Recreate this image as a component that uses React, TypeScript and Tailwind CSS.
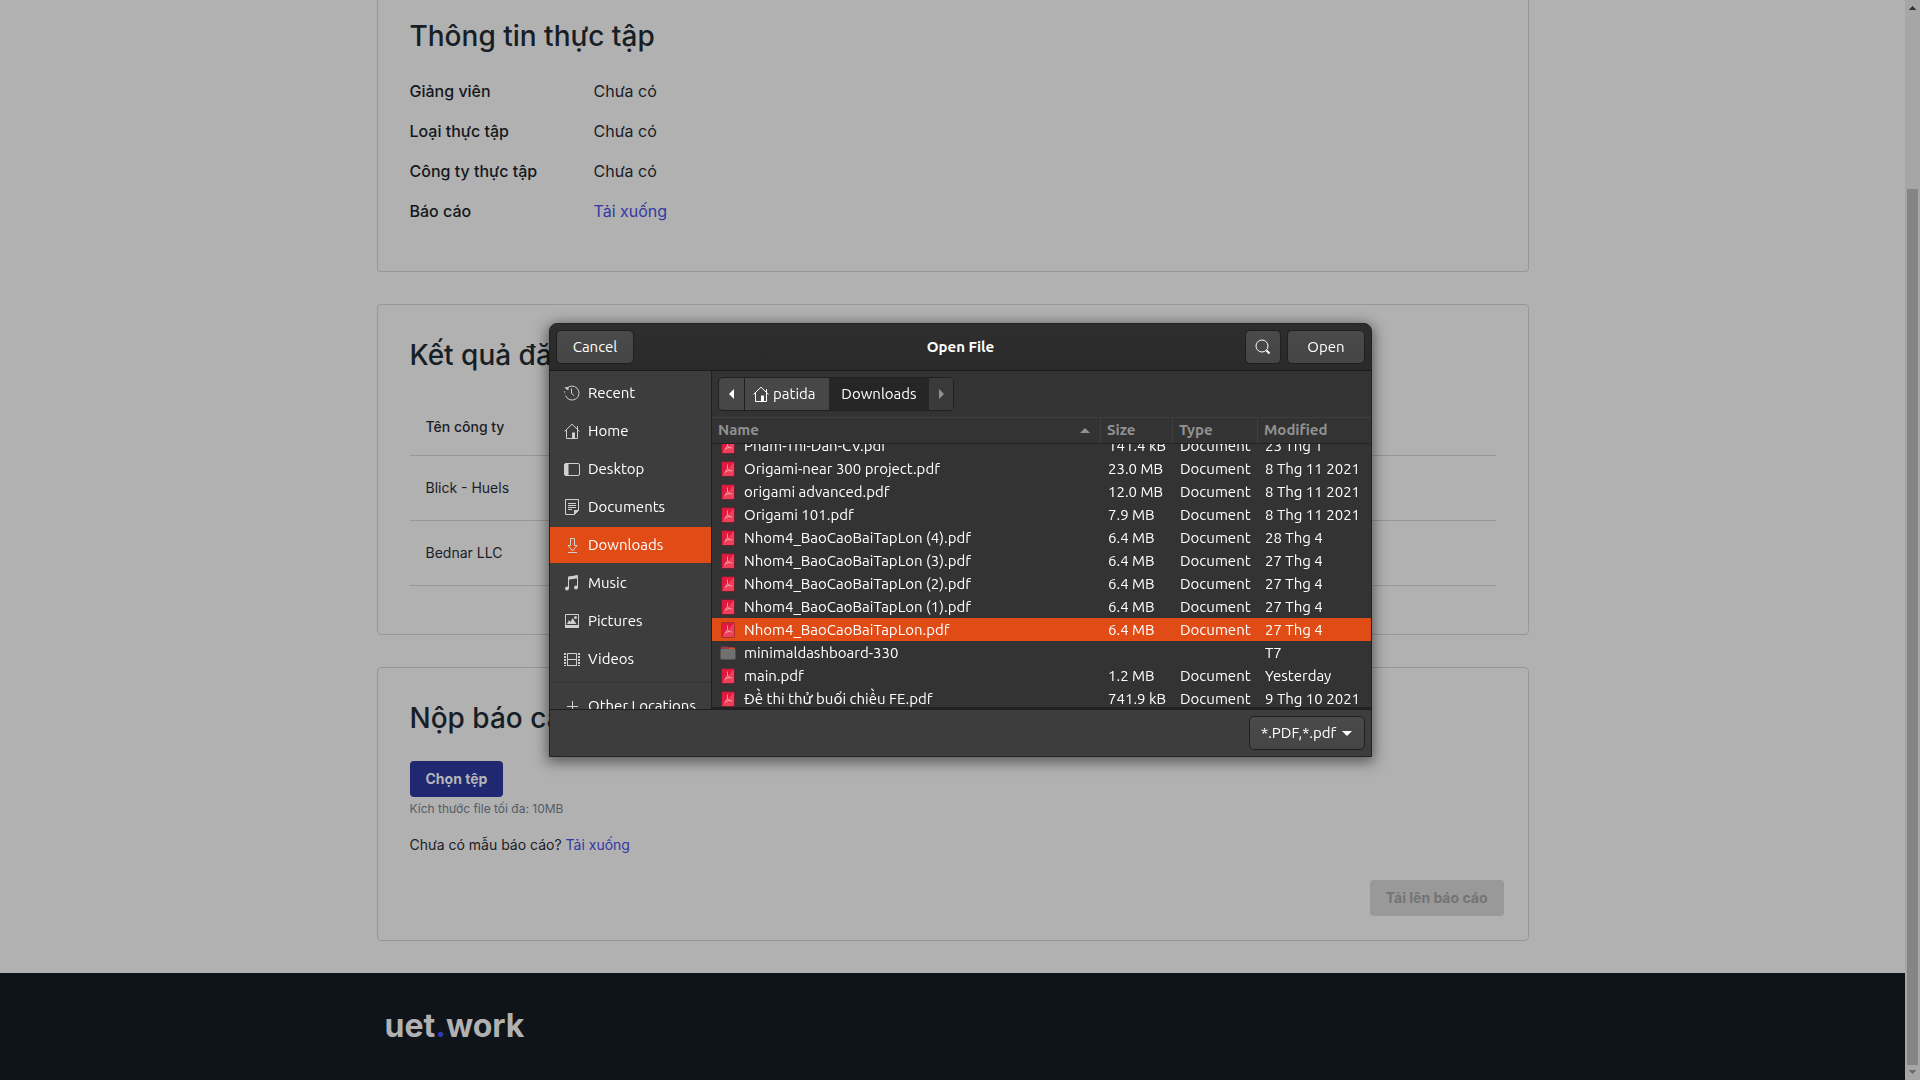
import { useId, useLayoutEffect, useRef } from "react";
import type { ReactNode } from "react";

const uiFont = "font-['Ubuntu','Noto_Sans',sans-serif]";

function Svg({ children, className = "" }: { children: ReactNode; className?: string }) {
  return (
    <svg viewBox="0 0 16 16" width="16" height="16" fill="none" stroke="currentColor" aria-hidden="true" className={"shrink-0 " + className}>
      {children}
    </svg>
  );
}

const RecentIcon = () => (
  <Svg>
    <path d="M2.2 4.2A7 7 0 1 1 1.5 10.6M7.5 3.5v4.7l2.5 2.6" />
    <path d="M.7 8.3h1.4M.2 2.5 4.6 2 4.4 5.5Z" fill="currentColor" stroke="none" />
    <path d="M.6 6.3v2.5" strokeDasharray="1.2 1" />
  </Svg>
);
const HomeIcon = () => (
  <Svg>
    <path d="M.5 8.4 8 1.2l7.5 7.2M2.5 7v8.5h3M13.5 3v12.5h-3" />
    <path d="M8 9.5h3V16H8z" fill="currentColor" stroke="none" />
    <path d="M3 15.5h5" />
  </Svg>
);
const DesktopIcon = () => (
  <Svg>
    <rect x=".5" y="2.5" width="15" height="12" rx="1.5" />
    <path d="M1 3h3v11H1z" fill="currentColor" />
  </Svg>
);
const DocumentsIcon = () => (
  <Svg>
    <path d="M1.5.5h13v11l-4 4h-9zM4 4.5h8M4 6.5h8M4 8.5h8M4 10.5h4" />
    <path d="M10 11h5l-5 5z" fill="currentColor" stroke="none" />
  </Svg>
);
const DownloadsIcon = () => (
  <Svg>
    <path d="M6.5 1.500h4v7H13L8.500 14 4 8.500h2.500zM4 15.500h9" />
  </Svg>
);
const MusicIcon = () => (
  <Svg>
    <path d="M4.500 13V2.200l9-1.500V12" />
    <path d="M4 1.800 14 .2v3L4 4.700z" fill="currentColor" stroke="none" />
    <circle cx="3" cy="13.500" r="2" fill="currentColor" stroke="none" />
    <circle cx="12" cy="12.500" r="2" fill="currentColor" stroke="none" />
  </Svg>
);
const PicturesIcon = () => (
  <Svg>
    <path d="M1.500 1.500h13v12h-13z" />
    <path d="M1 12h14v3H1zM3 11l2-4 1.500 2L8.500 5l4 6z" fill="currentColor" stroke="none" />
    <circle cx="11.500" cy="4.500" r="1.500" fill="currentColor" stroke="none" />
  </Svg>
);
const VideosIcon = () => (
  <Svg>
    <path d="M3.500 2v13M12.500 2v13M3 2.500h10M3 8.500h10M3 14.500h10" />
    <path d="M1 2v13M15 2v13" strokeDasharray="2 1" strokeWidth="2" />
  </Svg>
);
const PlusIcon = () => (
  <Svg>
    <path d="M8.500 3v11M3 8.500h11" />
  </Svg>
);

function PdfIcon() {
  const id = useId();
  return (
    <svg viewBox="0 0 16 16" width="16" height="16" fill="none" aria-hidden="true" className="shrink-0">
      <defs>
        <linearGradient id={id} x1="0" y1="0" x2="1" y2="1">
          <stop offset=".48" stopColor="#e0193f" />
          <stop offset=".52" stopColor="#ed3f5a" />
        </linearGradient>
      </defs>
      <rect x="1" y="0" width="14" height="16" rx="1.500" fill="#8c1c30" opacity=".6" />
      <rect x="2" y="1" width="12" height="14" rx="1" fill={"url(#" + id + ")"} />
      <path d="M7.500 4v3.500L4.500 12M7.500 7.500 9 9.500l3 .5M5.500 10.500 9 9.500" stroke="#f7a3b0" strokeWidth=".9" strokeLinecap="round" />
    </svg>
  );
}
function FolderIcon() {
  return (
    <svg viewBox="0 0 16 16" width="16" height="16" aria-hidden="true" className="shrink-0">
      <path d="M1 2.500a1 1 0 0 1 1-1h5l1.500 1H14a1 1 0 0 1 1 1V6H1z" fill="#a03550" />
      <path d="M9 2.500h5a1 1 0 0 1 1 1V4H9z" fill="#dd4a1c" />
      <rect x="0.500" y="4" width="15" height="10.500" rx="1" fill="#707070" />
    </svg>
  );
}

const places = [
  { label: "Recent", icon: <RecentIcon /> },
  { label: "Home", icon: <HomeIcon /> },
  { label: "Desktop", icon: <DesktopIcon /> },
  { label: "Documents", icon: <DocumentsIcon /> },
  { label: "Downloads", icon: <DownloadsIcon /> },
  { label: "Music", icon: <MusicIcon /> },
  { label: "Pictures", icon: <PicturesIcon /> },
  { label: "Videos", icon: <VideosIcon /> },
];

type FileRow = { name: string; size: string; type: string; modified: string };
const doc = (name: string, size: string, modified: string): FileRow => ({ name, size, type: "Document", modified });
const files: FileRow[] = [
  doc("Pham-Thi-Dan-CV.pdf", "141.4 kB", "23 Thg 1"),
  doc("Origami-near 300 project.pdf", "23.0 MB", "8 Thg 11 2021"),
  doc("origami advanced.pdf", "12.0 MB", "8 Thg 11 2021"),
  doc("Origami 101.pdf", "7.9 MB", "8 Thg 11 2021"),
  doc("Nhom4_BaoCaoBaiTapLon (4).pdf", "6.4 MB", "28 Thg 4"),
  doc("Nhom4_BaoCaoBaiTapLon (3).pdf", "6.4 MB", "27 Thg 4"),
  doc("Nhom4_BaoCaoBaiTapLon (2).pdf", "6.4 MB", "27 Thg 4"),
  doc("Nhom4_BaoCaoBaiTapLon (1).pdf", "6.4 MB", "27 Thg 4"),
  doc("Nhom4_BaoCaoBaiTapLon.pdf", "6.4 MB", "27 Thg 4"),
  { name: "minimaldashboard-330", size: "", type: "", modified: "T7" },
  doc("main.pdf", "1.2 MB", "Yesterday"),
  doc("Đề thi thử buổi chiều FE.pdf", "741.9 kB", "9 Thg 10 2021"),
];
const selectedFile = "Nhom4_BaoCaoBaiTapLon.pdf";

const raised = "border border-[#1f1f1f] bg-linear-to-b from-[#4a4a4a] to-[#454545]";

function FileList() {
  const scroller = useRef<HTMLDivElement>(null);
  useLayoutEffect(() => {
    if (scroller.current) scroller.current.scrollTop = 10;
  }, []);
  const head = "sticky top-0 h-[27px] border-y border-t-[#3f3f3f] border-b-[#212121] bg-[#333] p-0 pb-px text-left leading-5 font-bold";
  const cell = "p-0 pl-2 leading-[23px] whitespace-nowrap";
  return (
    <div ref={scroller} className="min-h-0 flex-1 overflow-hidden border-b-2 border-[#212121]">
      <table className="w-full table-fixed border-separate border-spacing-0">
        <thead className="text-[#919191]">
          <tr>
            <th scope="col" className={head + " pl-1.5"}>
              <span className="flex items-center justify-between pr-2.5">
                Name
                <svg viewBox="0 0 10 5" width="10" height="5" fill="currentColor" aria-hidden="true"><path d="M5 0l5 5H0z" /></svg>
              </span>
            </th>
            <th scope="col" className={head + " w-[72px] border-l border-l-[#3f3f3f] pl-1.5"}>Size</th>
            <th scope="col" className={head + " w-[85px] border-l border-l-[#3f3f3f] pl-1.5"}>Type</th>
            <th scope="col" className={head + " w-[114px] border-l border-l-[#3f3f3f] pl-1.5"}>Modified</th>
          </tr>
        </thead>
        <tbody>
          {files.map((f) => (
            <tr key={f.name} className={f.name === selectedFile ? "bg-[#e04b16]" : ""}>
              <td className={cell}>
                <span className="flex items-center gap-2">
                  {f.type ? <PdfIcon /> : <FolderIcon />}
                  {f.name}
                </span>
              </td>
              <td className={cell}>{f.size}</td>
              <td className={cell}>{f.type}</td>
              <td className={cell}>{f.modified}</td>
            </tr>
          ))}
        </tbody>
      </table>
    </div>
  );
}

function FileDialog() {
  const place = "flex h-9 w-full shrink-0 items-center gap-2 pl-3.5 text-left";
  return (
    <div className="fixed inset-0 flex items-center justify-center pl-px">
      <section
        role="dialog"
        aria-label="Open File"
        className={"flex w-[823px] flex-col overflow-hidden rounded-t-lg border border-[#232323] bg-[#3d3d3d] text-[15px] text-white shadow-[0_3px_14px_2px_rgba(0,0,0,0.5)] " + uiFont}
      >
        <header className="grid h-[47px] grid-cols-[1fr_auto_1fr] items-center border-b border-[#1c1c1c] bg-linear-to-b from-[#2e2e2e] to-[#2a2a2a] px-1.5">
          <button type="button" className={"h-[34px] w-[78px] justify-self-start rounded-[5px] " + raised}>Cancel</button>
          <h1 className="font-bold">Open File</h1>
          <div className="flex justify-end gap-1.5">
            <button type="button" aria-label="Search" className={"flex h-[34px] w-9 items-center justify-center rounded-[5px] " + raised}>
              <Svg>
                <circle cx="7" cy="7" r="6" />
                <path d="m11.500 11.500 3 3" strokeWidth="2" />
              </Svg>
            </button>
            <button type="button" className={"h-[34px] w-[78px] rounded-[5px] " + raised}>Open</button>
          </div>
        </header>

        <div className="flex h-[338px]">
          <nav aria-label="Places" className="flex w-[162px] shrink-0 flex-col gap-0.5 overflow-hidden border-r border-[#1f1f1f] pt-1">
            {places.map((p) => (
              <button key={p.label} type="button" className={place + (p.label === "Downloads" ? " bg-[#e04b16]" : "")}>
                <span className="text-[#d0d0d0]">{p.icon}</span>
                {p.label}
              </button>
            ))}
            <hr className="my-[3px] border-[#353535]" />
            <button type="button" className={place}>
              <span className="text-[#d0d0d0]"><PlusIcon /></span>
              <span className="whitespace-nowrap">Other Locations</span>
            </button>
          </nav>

          <div className="flex min-w-0 flex-1 flex-col bg-[#333]">
            <div className="px-1.5 py-1.5">
              <div className="flex h-[34px] w-fit overflow-hidden rounded-[5px] border border-[#1f1f1f] bg-[#474747]">
                <button type="button" aria-label="Back" className="flex w-[26px] items-center justify-center border-r border-[#1f1f1f]">
                  <svg viewBox="0 0 5 10" width="5" height="10" fill="currentColor" aria-hidden="true"><path d="M5 0v10L0 5z" /></svg>
                </button>
                <button type="button" className="flex w-[84px] items-center gap-1 pl-2"><HomeIcon />patida</button>
                <button type="button" className="w-[100px] bg-[#262626]">Downloads</button>
                <button type="button" aria-label="Forward" className="flex w-6 items-center justify-center bg-[#3a3a3a] text-[#919191]">
                  <svg viewBox="0 0 5 10" width="5" height="10" fill="currentColor" aria-hidden="true"><path d="M0 0v10l5-5z" /></svg>
                </button>
              </div>
            </div>
            <FileList />
          </div>
        </div>

        <footer className="flex h-[47px] items-center justify-end border-t border-[#1f1f1f] px-1.5">
          <div className={"relative rounded-[5px] " + raised}>
            <select aria-label="File type" className="h-8 w-[114px] appearance-none bg-transparent pl-[11px] outline-none">
              <option>*.PDF,*.pdf</option>
            </select>
            <svg viewBox="0 0 10 5" width="10" height="5" fill="currentColor" aria-hidden="true" className="pointer-events-none absolute top-3.5 right-3"><path d="M0 0h10L5 5z" /></svg>
          </div>
        </footer>
      </section>
    </div>
  );
}

const card = "rounded-sm border border-[#979797] pl-8";
const title = "text-[28px] leading-9 font-medium text-[#171e26]";
const link = "text-[#3338a4]";

const details = [
  ["Giảng viên", "Chưa có"],
  ["Loại thực tập", "Chưa có"],
  ["Công ty thực tập", "Chưa có"],
];
const companies = ["Blick - Huels", "Bednar LLC"];

export default function App() {
  return (
    <div className="flex min-h-screen bg-[#b1b1b1] font-['Inter',sans-serif] text-[#1b2026]">
      <div className="flex min-w-0 flex-1 flex-col">
        <main className="mx-auto flex w-full max-w-[1152px] flex-col gap-8 pb-8">
          <section className={card + " rounded-t-none border-t-0 pt-[18px] pb-10"}>
            <h2 className={title}>Thông tin thực tập</h2>
            <dl className="mt-[17px] grid grid-cols-[184px_1fr] leading-10">
              {details.map(([k, v]) => (
                <div key={k} className="contents">
                  <dt className="font-medium text-[#14181d]">{k}</dt>
                  <dd>{v}</dd>
                </div>
              ))}
              <dt className="font-medium text-[#14181d]">Báo cáo</dt>
              <dd><a href="#bao-cao" className={link}>Tải xuống</a></dd>
            </dl>
          </section>

          <section className={card + " pt-8 pr-8 pb-12"}>
            <h2 className={title}>Kết quả đăng ký</h2>
            <table className="mt-[26px] w-full text-left text-sm">
              <thead>
                <tr className="h-14 border-b border-[#979797]">
                  <th scope="col" className="px-4 font-medium">Tên công ty</th>
                </tr>
              </thead>
              <tbody>
                {companies.map((c) => (
                  <tr key={c} className="h-[65px] border-b border-[#979797]">
                    <td className="px-4">{c}</td>
                  </tr>
                ))}
              </tbody>
            </table>
          </section>

          <section className={card + " pt-8 pr-6 pb-6"}>
            <h2 className={title}>Nộp báo cáo</h2>
            <button type="button" className="mt-[25px] block h-9 rounded-sm bg-[#1f2871] px-4 text-sm font-bold text-[#b5b5b8]">Chọn tệp</button>
            <p className="mt-0.5 text-xs leading-5 text-[#535c66]">Kích thước file tối đa: 10MB</p>
            <p className="mt-4 text-sm leading-5">
              Chưa có mẫu báo cáo? <a href="#mau-bao-cao" className={link}>Tải xuống</a>
            </p>
            <div className="mt-[25px] flex justify-end">
              <button type="button" disabled className="h-9 rounded-sm bg-[#999] px-4 text-sm font-bold text-[#747474]">Tải lên báo cáo</button>
            </div>
          </section>
        </main>

        <footer className="flex-1 bg-[#0f131a]">
          <div className="mx-auto w-full max-w-[1152px] px-2 pt-8">
            <p className="text-[32px] leading-[42px] font-bold text-[#b1b1b1]">
              uet<span className="text-[#2f3bb0]">.</span>work
            </p>
          </div>
        </footer>
      </div>

      <div aria-hidden="true" className="flex w-[15px] flex-col items-center bg-[#a6a6a6] pt-1.5">
        <svg viewBox="0 0 7 4" width="7" height="4" fill="#383838"><path d="M3 0h1v1h1v1h1v1h1v1H0V3h1V2h1V1h1z" /></svg>
        <div className="mt-[179px] w-[11px] flex-1 bg-[#858585]" />
        <svg viewBox="0 0 7 4" width="7" height="4" fill="#6b6b6b" className="my-[5px] mb-1.5"><path d="M0 0h7v1H6v1H5v1H4v1H3V3H2V2H1V1H0z" /></svg>
      </div>

      <FileDialog />
    </div>
  );
}
